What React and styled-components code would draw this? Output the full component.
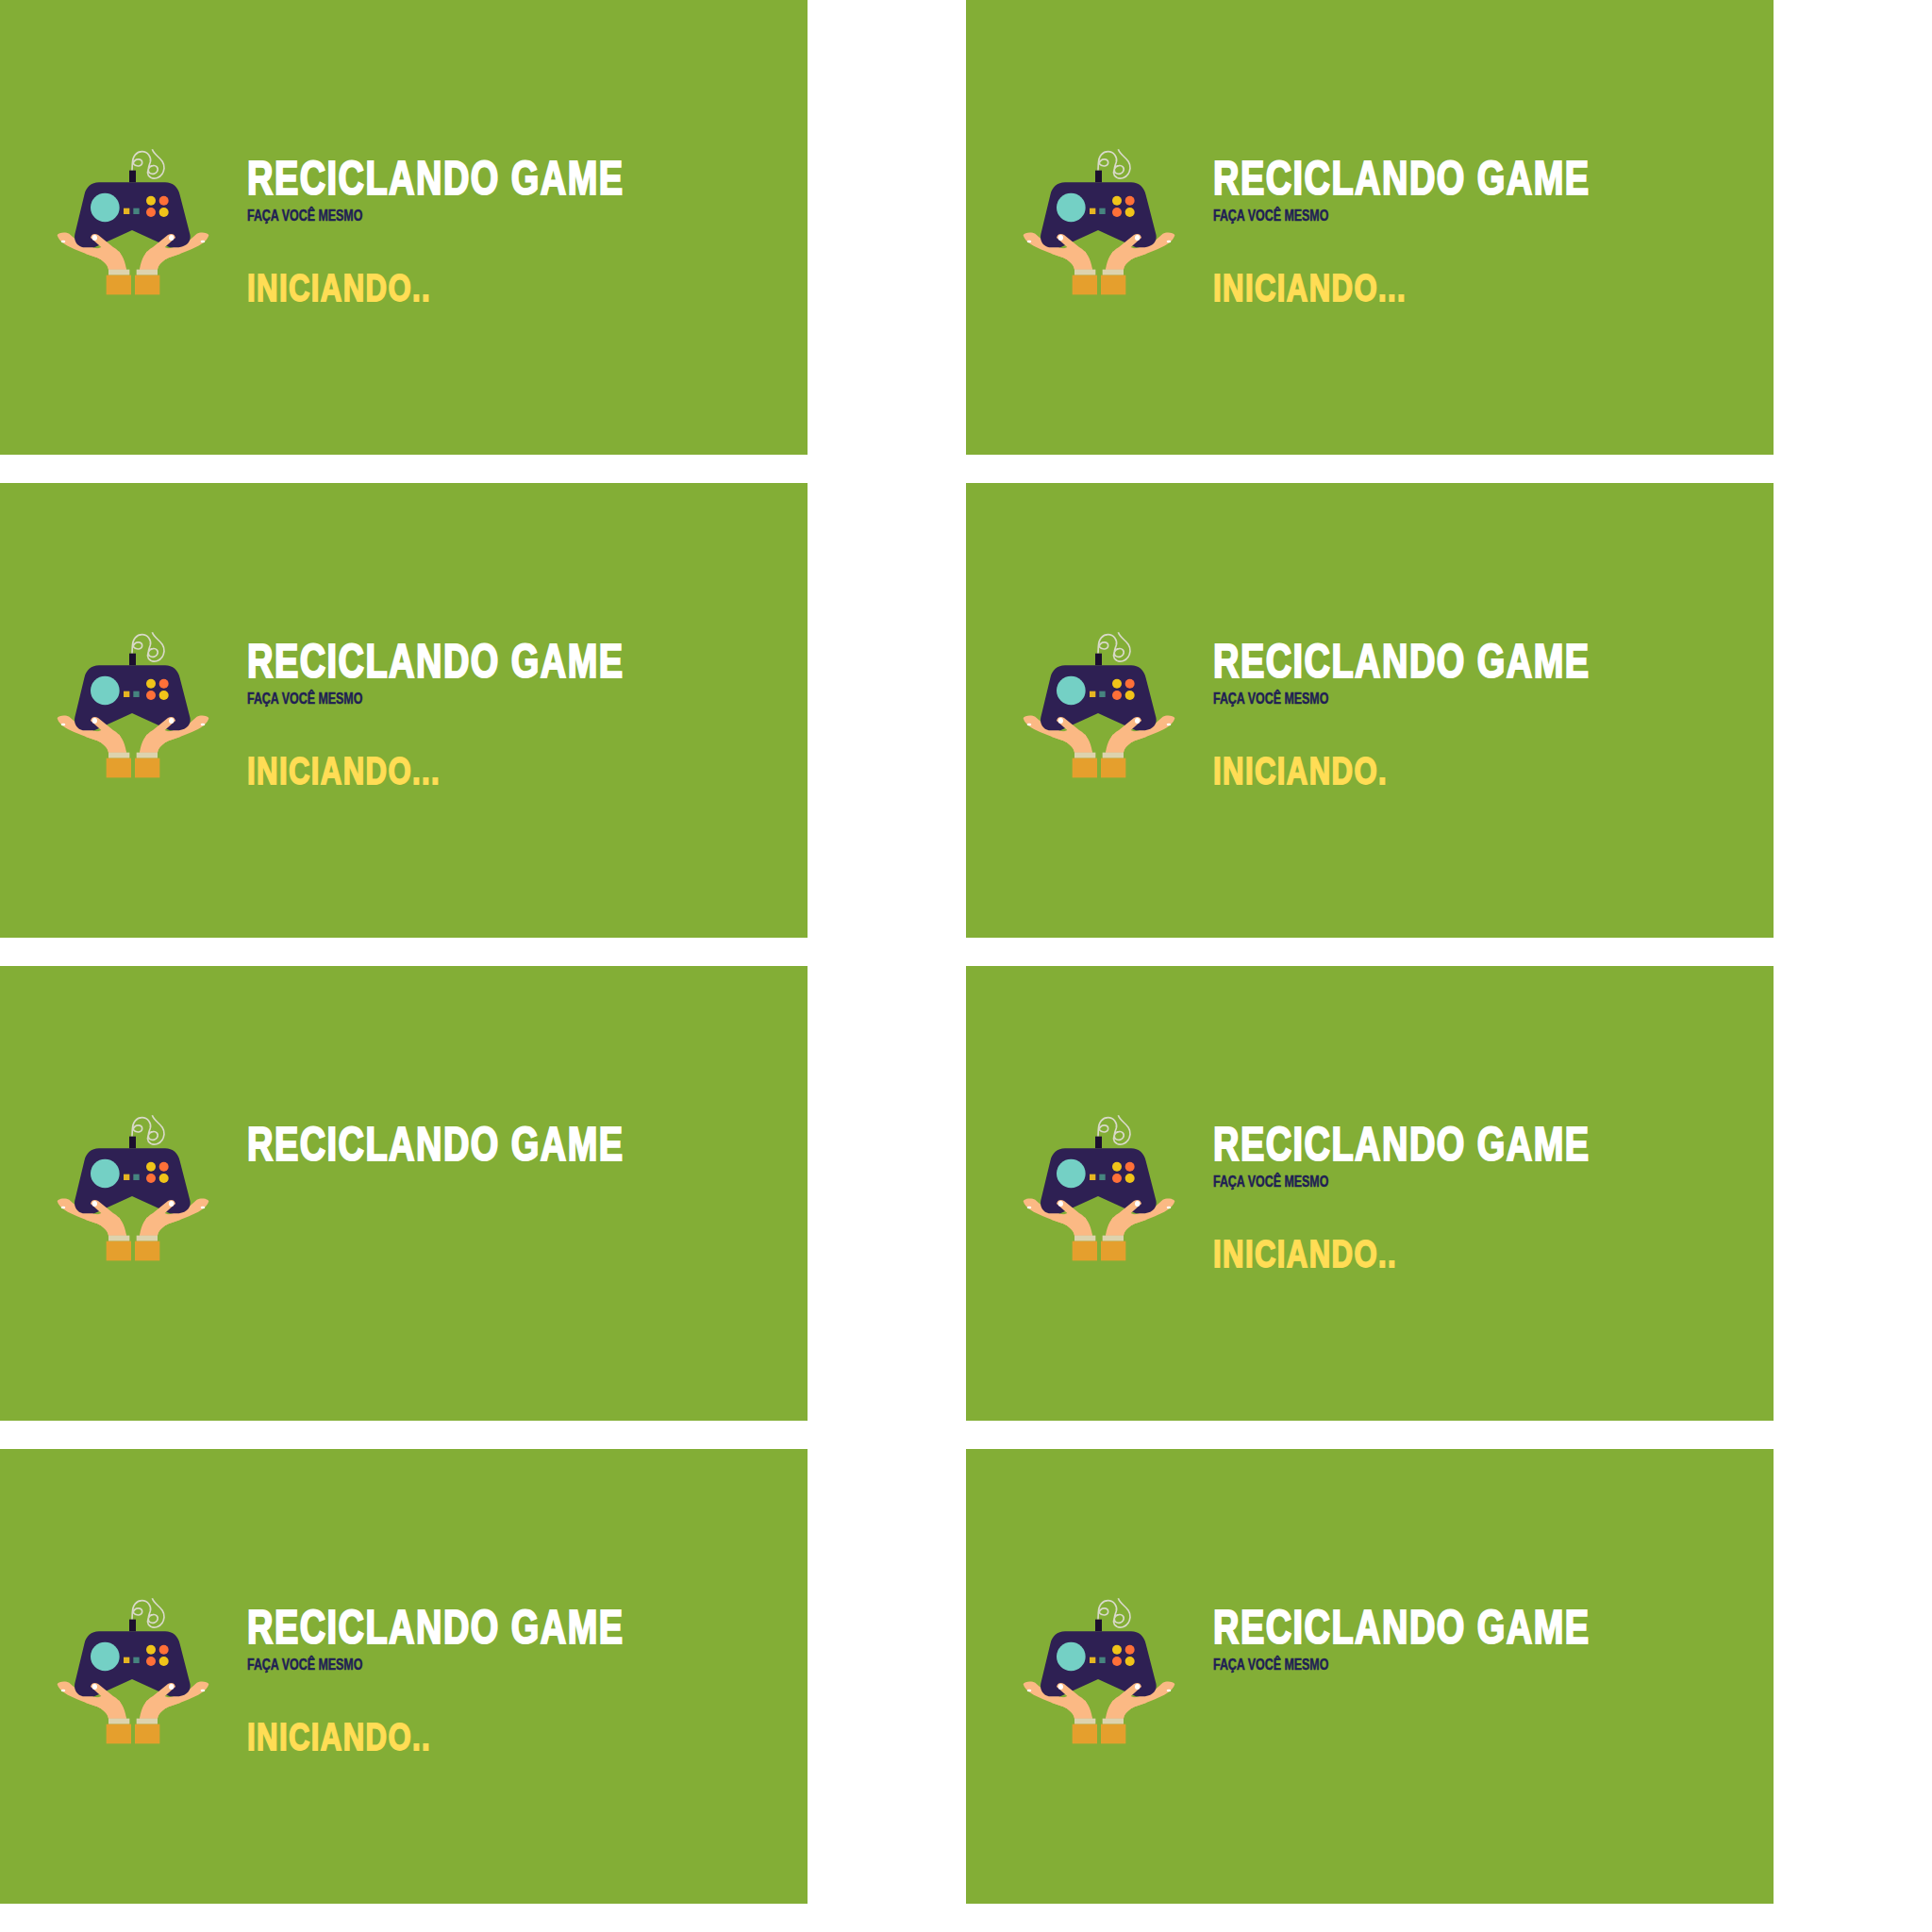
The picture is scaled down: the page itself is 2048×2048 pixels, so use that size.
import React from 'react';
import styled, { createGlobalStyle } from 'styled-components';

const GlobalStyle = createGlobalStyle`
  html, body {
    margin: 0;
    padding: 0;
    background: #fff;
  }
`;

const Grid = styled.div`
  display: grid;
  grid-template-columns: repeat(2, 1024px);
  grid-auto-rows: 512px;
  width: 2048px;
  height: 2048px;
`;

const Slide = styled.div`
  width: 856px;
  height: 482px;
  box-sizing: border-box;
  padding: 140px 0 0 40px;
  display: flex;
  align-items: flex-start;
  gap: 12px;
  background-color: #83ae36;
`;

const Logo = styled.svg`
  width: 210px;
  height: 190px;
  flex: none;
`;

const Info = styled.div`
  display: flex;
  flex-direction: column;
  align-items: flex-start;
  font-family: 'Liberation Sans', sans-serif;
  font-weight: 700;
`;

const Title = styled.h1`
  margin: 31px 0 0;
  font: inherit;
  font-size: 50px;
  line-height: 37px;
  letter-spacing: 1.9px;
  white-space: nowrap;
  color: #fff;
  -webkit-text-stroke: 2.2px #fff;
  transform: scaleX(0.76);
  transform-origin: left center;
`;

const Subtitle = styled.p`
  margin: 15px 0 0;
  font: inherit;
  font-size: 16px;
  line-height: 12px;
  white-space: nowrap;
  color: #1f2054;
  -webkit-text-stroke: 0.5px #1f2054;
  transform: scaleX(0.776);
  transform-origin: left center;
`;

const Status = styled.p`
  margin: 55px 0 0;
  font: inherit;
  font-size: 41px;
  line-height: 30px;
  letter-spacing: 1.8px;
  white-space: nowrap;
  color: #ffdd55;
  -webkit-text-stroke: 1.8px #ffdd55;
  transform: scaleX(0.76);
  transform-origin: left center;
`;

const slides = [
  { id: 1, sub: true, status: 'INICIANDO..' },
  { id: 2, sub: true, status: 'INICIANDO...' },
  { id: 3, sub: true, status: 'INICIANDO...' },
  { id: 4, sub: true, status: 'INICIANDO.' },
  { id: 5, sub: false, status: '' },
  { id: 6, sub: true, status: 'INICIANDO..' },
  { id: 7, sub: true, status: 'INICIANDO..' },
  { id: 8, sub: true, status: '' },
];

const HAND = 'M62 328 C66 319 88 317 100 323 L130 350 L180 368 L260 380 L282 437 L225 437 C222 420 205 407 190 400 C165 391 145 385 125 376 C100 365 68 352 62 328 Z';
const THUMB = 'M168 336 C170 325 180 320 192 327 L240 366 C264 380 276 400 282 437 L225 437 C222 420 205 407 190 400 L150 386 L202 366 Z';

const Hand = () => (
  <g>
    <path d={HAND} fill="#fbb984" />
    <ellipse cx="81" cy="348" rx="7" ry="4" fill="#fff" />
  </g>
);

const Thumb = () => (
  <g>
    <path d={THUMB} fill="#fbb984" />
    <ellipse cx="181" cy="336" rx="8" ry="9" fill="#fff" />
    <rect x="225" y="437" width="67" height="18" fill="#ddd3ae" />
    <rect x="218" y="455" width="79" height="62" fill="#e59f2d" />
  </g>
);

const GameLogo = () => (
  <Logo viewBox="0 0 630 570">
    <Hand />
    <g transform="translate(606 0) scale(-1 1)">
      <Hand />
    </g>
    <path
      d="M300 122 L301 100 C302 75 315 62 332 62 C350 62 362 80 358 95 C355 105 352 110 352 118 C350 135 372 138 380 125 C386 112 375 105 366 107 C352 108 346 125 352 138 C365 155 398 148 402 115 C404 85 372 78 364 55 M303 100 C310 80 332 85 332 97 C332 110 312 112 303 100"
      fill="none"
      stroke="#d9d9c9"
      strokeWidth="5"
    />
    <rect x="291" y="122" width="21" height="38" fill="#1b0f2e" />
    <path
      d="M195 160 L405 160 C430 160 446 175 452 200 L484 325 C490 350 470 367 440 367 L420 367 L300 312 L180 367 L150 367 C130 367 113 350 118 325 L148 200 C154 175 170 160 195 160 Z"
      fill="#2e2053"
    />
    <circle cx="214" cy="240" r="46" fill="#74d0c5" />
    <rect x="273" y="242" width="19" height="19" fill="#e5b522" />
    <rect x="304" y="242" width="19" height="19" fill="#46857f" />
    <circle cx="360" cy="218" r="15" fill="#f0c419" />
    <circle cx="401" cy="218" r="15" fill="#ff7038" />
    <circle cx="360" cy="255" r="15" fill="#ff7038" />
    <circle cx="401" cy="255" r="15" fill="#f0c419" />
    <Thumb />
    <g transform="translate(606 0) scale(-1 1)">
      <Thumb />
    </g>
  </Logo>
);

const App = () => (
  <>
    <GlobalStyle />
    <Grid>
      {slides.map((el) => (
        <Slide key={el.id}>
          <GameLogo />
          <Info>
            <Title>RECICLANDO GAME</Title>
            {el.sub && <Subtitle>FAÇA VOCÊ MESMO</Subtitle>}
            {el.status && <Status>{el.status}</Status>}
          </Info>
        </Slide>
      ))}
    </Grid>
  </>
);

export default App;
